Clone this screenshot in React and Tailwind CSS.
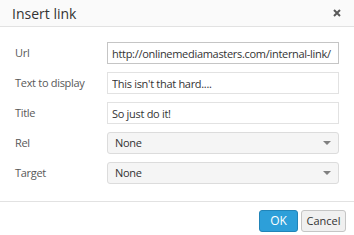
import React from "react";

const Field = ({ label, value, focused }) => (
  <div className="flex items-center h-[22px] mb-2">
    <label className="w-[92px] text-[11px] tracking-[-0.3px] text-[#595959]">{label}</label>
    <input
      readOnly
      value={value}
      className={`w-[232px] h-[22px] px-[4px] text-[11px] tracking-[-0.3px] text-[#333] bg-white border outline-none ${
        focused ? "border-[#c5c5c5]" : "border-[#e2e2e2]"
      }`}
    />
  </div>
);

const Select = ({ label, value }) => (
  <div className="flex items-center h-[22px] mb-2">
    <label className="w-[92px] text-[11px] tracking-[-0.3px] text-[#595959]">{label}</label>
    <div className="w-[232px] h-[22px] flex items-center justify-between pl-[7px] pr-[7px] text-[11px] tracking-[-0.3px] text-[#333] bg-[#f5f5f5] border border-[#dcdcdc] rounded-[3px]">
      <span>{value}</span>
      <span className="w-0 h-0 border-l-[4px] border-r-[4px] border-t-[4px] border-l-transparent border-r-transparent border-t-[#808080]" />
    </div>
  </div>
);

export default function App() {
  return (
    <div
      className="w-[354px] h-[235px] bg-white flex flex-col"
      style={{ fontFamily: "'Open Sans', 'Noto Sans', sans-serif" }}
    >
      <div className="h-[27px] flex items-center justify-between pl-[12px] pr-[13px] bg-[#fafafa] border-b border-[#e2e2e2]">
        <span className="text-[14px] text-[#333]">Insert link</span>
        <svg width="8" height="8" viewBox="0 0 8 8">
          <path d="M1 1L7 7M7 1L1 7" stroke="#595959" strokeWidth="2" />
        </svg>
      </div>
      <div className="pt-[15px] pl-[15px] h-[174px]">
        <Field label="Url" value="http://onlinemediamasters.com/internal-link/" focused />
        <Field label="Text to display" value="This isn't that hard...." />
        <Field label="Title" value="So just do it!" />
        <Select label="Rel" value="None" />
        <Select label="Target" value="None" />
      </div>
      <div className="border-t border-[#e2e2e2] flex justify-end items-start pt-[8px] pr-[8px] gap-[3px]">
        <button className="w-[39px] h-[22px] text-[12px] text-white bg-[#2d9fd9] border border-[#2184b8] rounded-[3px]">
          OK
        </button>
        <button className="w-[45px] h-[22px] text-[11px] text-[#333] bg-[#f0f0f0] border border-[#c5c5c5] rounded-[3px]">
          Cancel
        </button>
      </div>
    </div>
  );
}
